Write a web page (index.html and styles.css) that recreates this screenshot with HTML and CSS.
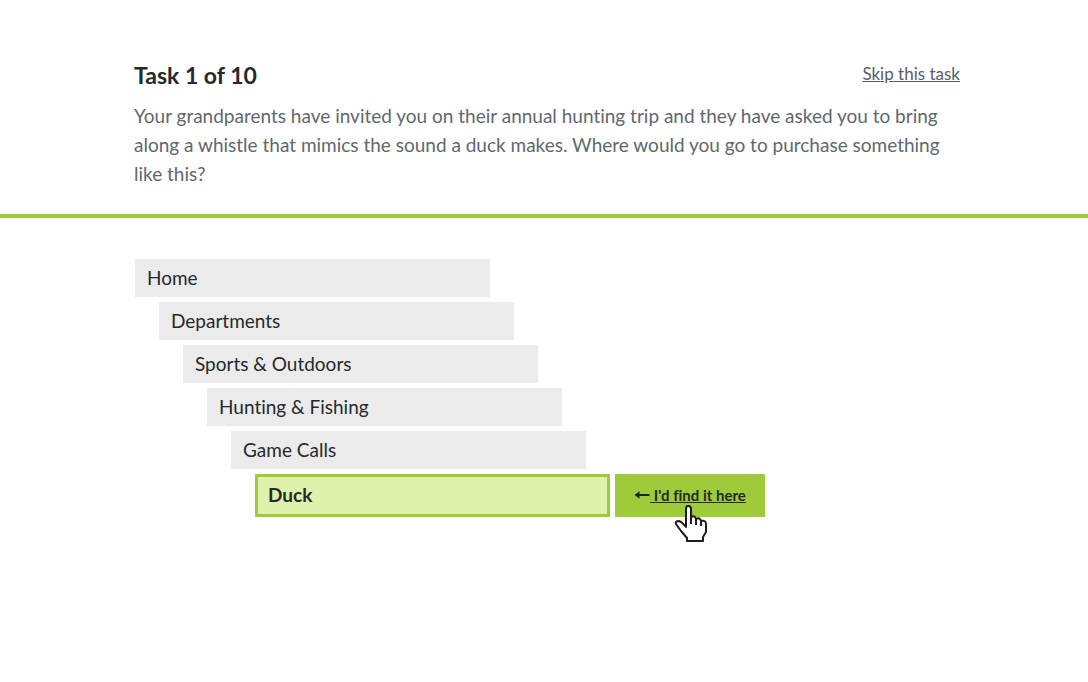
FILE: index.html
```html
<!DOCTYPE html>
<html lang="en">
  <head>
    <meta charset="utf-8">
    <title>Task 1 of 10</title>
    <link rel="stylesheet" href="styles.css">
  </head>
  <body>
    <header class="task">
      <div class="task-top">
        <h1>Task 1 of 10</h1>
        <a class="skip" href="#">Skip this task</a>
      </div>
      <p>Your grandparents have invited you on their annual hunting trip and they have asked you to bring along a whistle that mimics the sound a duck makes. Where would you go to purchase something like this?</p>
    </header>
    <main>
      <ul class="tree">
        <li>
          <button type="button" class="node">Home</button>
          <ul>
            <li>
              <button type="button" class="node">Departments</button>
              <ul>
                <li>
                  <button type="button" class="node">Sports &amp; Outdoors</button>
                  <ul>
                    <li>
                      <button type="button" class="node">Hunting &amp; Fishing</button>
                      <ul>
                        <li>
                          <button type="button" class="node">Game Calls</button>
                          <ul>
                            <li class="answer">
                              <button type="button" class="node selected">Duck</button>
                              <button type="button" class="find">
                                <svg class="arrow" width="16" height="10" viewBox="0 0 16 10" aria-hidden="true">
                                  <path d="M0.5 5 L5.5 1.3 V4 H15.5 V6 H5.5 V8.7 Z" fill="#1d2420"/>
                                </svg>
                                <span>&nbsp;I'd find it here</span>
                                <svg class="hand" width="34" height="38" viewBox="0 0 34 38" aria-hidden="true">
                                  <path d="M12 22 V4 Q12 1 14 1 Q17 1 17 4 V12 Q21 10 22 14 Q26 12 27 16 Q32 15 32 19 V27 L29 32 V36 H13 V33 L7 26 L2 19 Q1 16 5 16 Q8 17 12 22 Z" fill="#fff" stroke="#1c1c1c" stroke-width="2" stroke-linejoin="round"/>
                                  <path d="M17 11 V19 M22 13 V20 M27 15 V21" fill="none" stroke="#1c1c1c" stroke-width="2"/>
                                </svg>
                              </button>
                            </li>
                          </ul>
                        </li>
                      </ul>
                    </li>
                  </ul>
                </li>
              </ul>
            </li>
          </ul>
        </li>
      </ul>
    </main>
  </body>
</html>
```

FILE: styles.css
```css
body {
  margin: 0;
  background-color: #fff;
  color: #25292c;
  font-family: Lato, "Open Sans", sans-serif;
  font-size: 19px;
  font-variant-ligatures: none;
}

.task {
  padding: 59px 128px 26px 134px;
  border-bottom: 4px solid #9fcb3b;
}

.task-top {
  display: flex;
  justify-content: space-between;
  align-items: flex-start;
}

h1 {
  margin: 0;
  font-size: 23px;
  line-height: 32px;
}

.skip {
  color: #566068;
  font-size: 17px;
  line-height: 30px;
}

.task p {
  margin: 10px 0 0;
  color: #60686e;
  line-height: 29px;
}

main {
  padding: 41px 24px 40px 135px;
}

.tree, .tree ul {
  margin: 0;
  padding: 0;
  list-style: none;
}

.tree ul {
  margin: 5px 0 0 24px;
}

button {
  border: none;
  color: inherit;
  font-family: inherit;
  font-variant-ligatures: inherit;
  cursor: pointer;
}

.node {
  display: block;
  box-sizing: border-box;
  width: 355px;
  height: 38px;
  padding: 0 12px 2px;
  background-color: #ebebeb;
  font-size: 19px;
  text-align: left;
}

.answer {
  display: flex;
  gap: 5px;
}

.selected {
  height: 43px;
  border: 3px solid #9fcb3b;
  padding: 0 10px 2px;
  background-color: #def2ab;
  font-weight: bold;
}

.find {
  position: relative;
  display: flex;
  align-items: center;
  justify-content: center;
  width: 150px;
  padding: 0 0 2px;
  background-color: #9fcb3b;
  font-size: 15px;
  font-weight: bold;
}

.find span {
  text-decoration: underline;
}

.hand {
  position: absolute;
  top: 31px;
  left: 59px;
}
```
